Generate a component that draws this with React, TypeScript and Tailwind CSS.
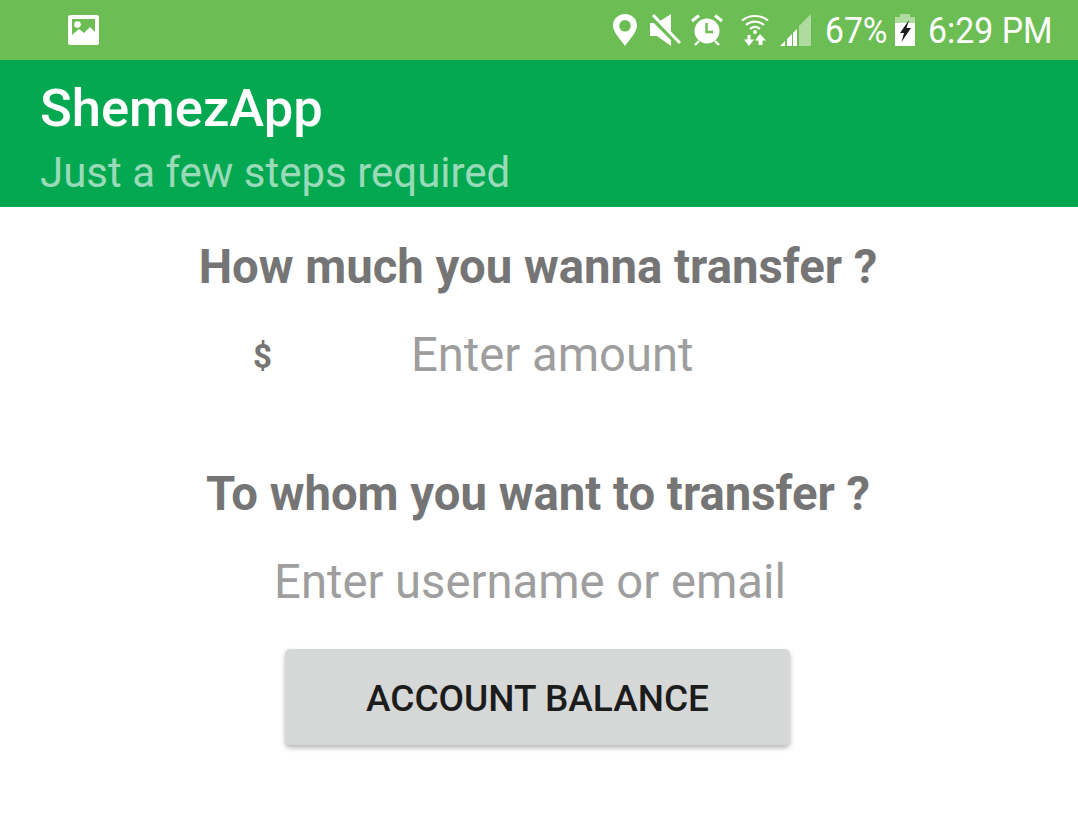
const roboto = "font-['Roboto',sans-serif]";

function ImageIcon() {
  return (
    <svg width="31" height="30" viewBox="0 0 31 30" className="ml-[68px]">
      <rect x="0" y="0" width="31" height="30" rx="2.5" fill="#fff" />
      <rect x="4" y="4" width="23" height="22" fill="#6dbd55" />
      <circle cx="9.5" cy="9.5" r="3.3" fill="#fff" />
      <path d="M4 26 V20 L11 14 L16 18 L22 12 L27 17 V26 Z" fill="#fff" />
    </svg>
  );
}

function PinIcon() {
  return (
    <svg width="24" height="32" viewBox="0 0 24 32">
      <path
        fillRule="evenodd"
        d="M12 0 C5 0 0 5.2 0 11.6 C0 19 9 27 12 32 C15 27 24 19 24 11.6 C24 5.2 19 0 12 0 Z M12 6 A5.8 5.8 0 1 1 12 17.6 A5.8 5.8 0 1 1 12 6 Z"
        fill="#fff"
      />
    </svg>
  );
}

function MuteIcon() {
  return (
    <svg width="31" height="32" viewBox="0 0 31 32">
      <path d="M0 9 H7 L21 0 V32 L7 22 H0 Z" fill="#fff" />
      <path d="M1 2 L29 30" stroke="#6dbd55" strokeWidth="6" />
      <path d="M3 1 L30 29" stroke="#fff" strokeWidth="3" />
    </svg>
  );
}

function AlarmIcon() {
  return (
    <svg width="32" height="32" viewBox="0 0 32 32">
      <circle cx="16" cy="17" r="12.5" fill="#fff" />
      <path d="M15.5 9 V18 H22" fill="none" stroke="#6dbd55" strokeWidth="2.4" />
      <path d="M1 7 L8 1.5 M31 7 L24 1.5" stroke="#fff" strokeWidth="3" />
      <path d="M4 31 L8 27 M28 31 L24 27" stroke="#fff" strokeWidth="2.4" />
    </svg>
  );
}

function WifiIcon() {
  return (
    <svg width="28" height="32" viewBox="0 0 28 32">
      <g fill="none" stroke="#fff" strokeWidth="2.2">
        <path d="M1 6.5 C8 0.5 20 0.5 27 6.5" />
        <path d="M5 11 C10 6.5 18 6.5 23 11" />
        <path d="M9 15 C12 12.5 16 12.5 19 15" />
      </g>
      <circle cx="14" cy="18" r="2" fill="#fff" />
      <path d="M8 32 L3 25.5 H6.5 V21 H9.5 V25.5 H13 Z" fill="#fff" />
      <path d="M19 20 L25 26.5 H21.5 V31 H17.5 V26.5 H14 Z" fill="#fff" />
    </svg>
  );
}

function SignalIcon() {
  return (
    <svg width="32" height="32" viewBox="0 0 32 32">
      <path d="M20 32 V12 L32 0 V32 Z" fill="#fff" fillOpacity="0.45" />
      <path d="M1 32 L6 27 V32 Z M8 32 V25 L13 20 V32 Z M14 32 V19 L18 15 V32 Z" fill="#fff" />
    </svg>
  );
}

function BatteryIcon() {
  return (
    <svg width="20" height="32" viewBox="0 0 20 32">
      <path d="M5 0 H15 V3 H20 V9 H0 V3 H5 Z" fill="#fff" fillOpacity="0.45" />
      <rect x="0" y="9" width="20" height="23" fill="#fff" />
      <path d="M14 6 L5 19 H9 L6.5 28 L16 14 H11.5 Z" fill="#1c1c1c" />
    </svg>
  );
}

function StatusBar() {
  return (
    <div className="flex h-[60px] items-center justify-between bg-[#6dbd55] pr-[26px]">
      <ImageIcon />
      <div className="flex items-center text-white">
        <PinIcon />
        <div className="ml-[13px]"><MuteIcon /></div>
        <div className="ml-[10px]"><AlarmIcon /></div>
        <div className="ml-[18px]"><WifiIcon /></div>
        <div className="ml-[10px]"><SignalIcon /></div>
        <div className="ml-[14px] w-[61px]">
          <span className="block origin-left scale-x-[0.91] whitespace-nowrap text-[37px] leading-none">67%</span>
        </div>
        <div className="ml-[9px]"><BatteryIcon /></div>
        <div className="ml-[13px] w-[124px]">
          <span className="block origin-left scale-x-[0.915] whitespace-nowrap text-[37px] leading-none">6:29 PM</span>
        </div>
      </div>
    </div>
  );
}

export default function App() {
  return (
    <div className={`${roboto} h-[827px] w-[1078px] overflow-hidden bg-white`}>
      <StatusBar />

      <div className="h-[147px] bg-[#04a851] px-10 pt-[16px]">
        <h1 className="text-[52.5px] font-medium leading-[64px] text-white">ShemezApp</h1>
        <p className="mt-[5px] text-[42px] leading-[56px] text-white/60">Just a few steps required</p>
      </div>

      <div className="flex flex-col items-center pr-[2px]">
        <h2 className="mt-[28px] text-[47.3px] font-bold leading-[64px] text-[#757575]">
          How much you wanna transfer ?
        </h2>
        <div className="mt-[25px] flex h-[64px] w-full items-center">
          <span className="ml-[253px] mt-[1px] text-[33px] font-bold text-[#757575]">$</span>
          <span className="ml-[139px] text-[47.2px] leading-none text-[#9e9e9e]">Enter amount</span>
        </div>
        <h2 className="mt-[74px] text-[47.3px] font-bold leading-[64px] text-[#757575]">
          To whom you want to transfer ?
        </h2>
        <div className="mt-[25px] mr-[16px] flex h-[64px] items-center text-[47.2px] leading-none text-[#9e9e9e]">
          Enter username or email
        </div>
        <button className="mt-[34px] mr-[1px] h-[96px] w-[505px] rounded-[5px] bg-[#d6d7d7] pt-[3px] text-[37px] font-medium text-[#1c1c1c] shadow-[0_3px_5px_rgba(0,0,0,0.28)]">
          ACCOUNT BALANCE
        </button>
      </div>
    </div>
  );
}
